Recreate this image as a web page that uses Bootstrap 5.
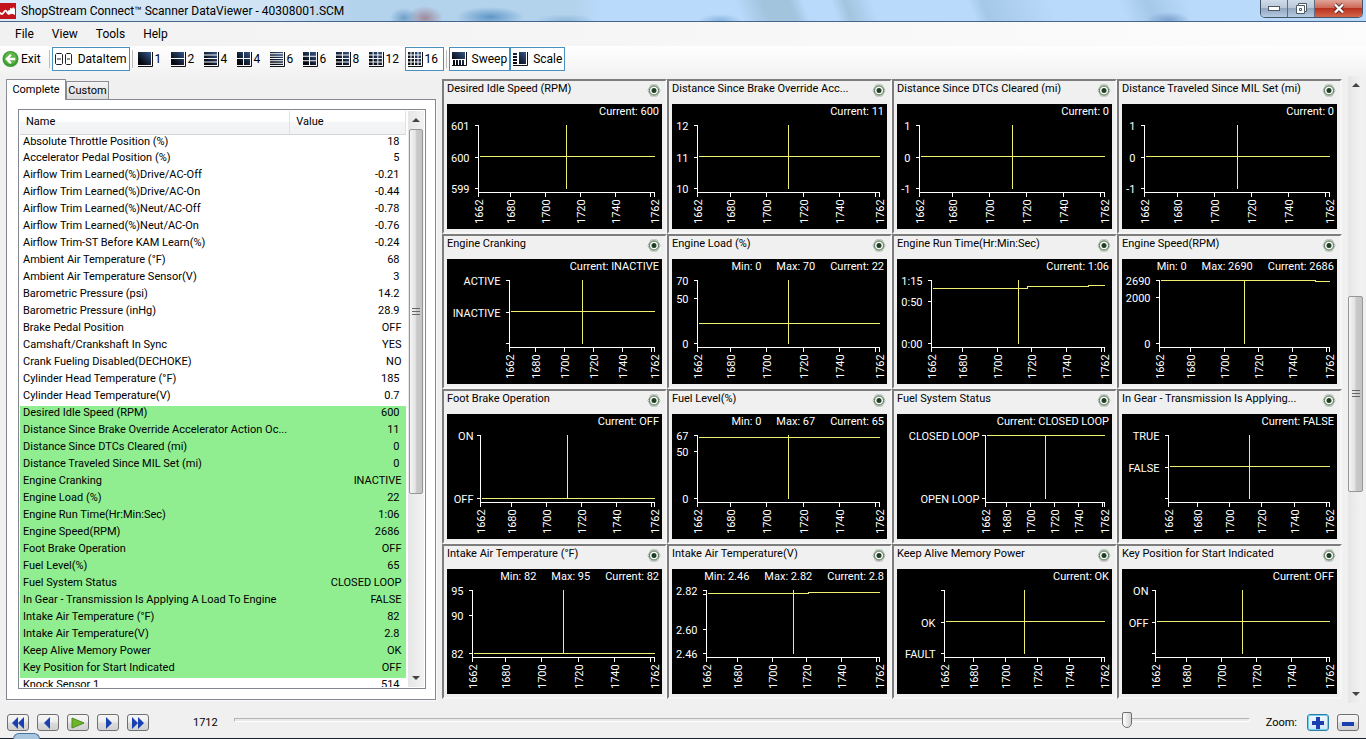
<!DOCTYPE html>
<html lang="en">
<head>
<meta charset="utf-8">
<meta name="viewport" content="width=device-width, initial-scale=1">
<title>ShopStream Connect™ Scanner DataViewer - 40308001.SCM</title>
<link rel="stylesheet" href="https://cdn.jsdelivr.net/npm/bootstrap@5.3.0/dist/css/bootstrap.min.css">
<style>
  :root { --data: Roboto, "Liberation Sans", sans-serif; }
  body { background: #f0f0f0; color: #000; font: 12px/16px var(--data); overflow: hidden; }
  button { font: inherit; color: inherit; }
  svg { display: block; flex: none; }

  .titlebar { height: 22px; border-bottom: 1px solid #46648c;
    background:
      radial-gradient(ellipse 14px 10px at 404px 18px, #6fa0c8, transparent),
      radial-gradient(ellipse 18px 12px at 425px 18px, #a08a9c, transparent),
      radial-gradient(ellipse 34px 10px at 490px 17px, #5f97c8, transparent),
      radial-gradient(ellipse 30px 7px at 565px 21px, #8fb9dd, transparent),
      radial-gradient(ellipse 22px 7px at 720px 21px, #86b4dc, transparent),
      radial-gradient(ellipse 22px 8px at 1168px 20px, #7ba4cf, transparent),
      linear-gradient(70deg, transparent 54%, #a3c4dd 56%, #a3c4dd 58%, transparent 59%, transparent 61%, #a3c4dd 62%, transparent 64%, transparent 71%, #a6c8e8 72%, transparent 77%, transparent 82%, #a6c8e8 84%, transparent 87%),
      linear-gradient(90deg, #dcebf7, #cfe3f5 20%, #b3d2ec 26%, #b3d2ec 42%, #b9dafb 44%, #b9dafb); }
  .apptitle { padding: 3px 0 0 1px; }
  .winbtns { height: 18px; border: 1px solid #44546a; border-top: 0; border-radius: 0 0 5px 5px; overflow: hidden; margin-right: 3px; }
  .winbtns button { border: 0; border-right: 1px solid #5c6d82; padding: 0; width: 27px;
    background: linear-gradient(#cfdbe8, #b9c8d8 45%, #93a7bd 50%, #b4cbe2); display: flex; align-items: center; justify-content: center; }
  .winbtns .closer { width: 47px; border-right: 0; background: linear-gradient(#e0a498, #cf6a58 45%, #b93220 50%, #d4664a); }

  .menubar { height: 24px; background: linear-gradient(90deg, #f1f1f1, #fcfcfc); padding-left: 15px; gap: 18px; }
  .menubar a { color: #000; text-decoration: none; }
  .toolstrip { height: 33px; padding-top: 1px; background: linear-gradient(#fff, #f0f0f0); }
  .tool { height: 24px; border: 1px solid transparent; background: none; padding: 0 2px; display: flex; align-items: center; gap: 1px; white-space: nowrap; }
  .tool.checked { border-color: #4a90bf; background: #fff; }
  .tool.one { width: 33px; }
  .tool.two { width: 39px; }
  .exit { padding: 0 5px 0 1px; gap: 2px; }
  .divider { width: 1px; height: 18px; background: #bdbdbd; margin: 3px 2px 0; }

  main { min-height: 0; padding: 0 3px 0 6px; }
  .side { flex: 0 0 430px; }
  .tabs { height: 20px; }
  .tabs button { font: 11px/14px var(--data); border: 1px solid #898c95; border-bottom: 0; padding: 0; }
  .tabs .front { height: 21px; width: 60px; background: #fff; position: relative; z-index: 1; margin-bottom: -1px; }
  .tabs .back { height: 18px; width: 43px; background: linear-gradient(#f3f3f3, #dcdcdc); }
  .tabpage { border: 1px solid #828790; background: #fff; padding: 9px 9px 10px 11px; min-height: 0; box-shadow: 1px 1px #fafafa; }
  .listbox { border: 1px solid #828790; padding: 1px; overflow: hidden; }
  .datalist { font: 11px/14px var(--data); width: 100%; table-layout: fixed; border-collapse: collapse; }
  .datalist col:first-child { width: 70%; }
  .datalist th { font-weight: 400; height: 23px; padding: 0 6px; background: linear-gradient(#fff 45%, #f4f5f6 50%, #f1f2f4); border-bottom: 1px solid #d5d5d5; border-right: 1px solid #dfe1e3; }
  .datalist td { height: 17px; padding: 0 3px; white-space: nowrap; vertical-align: top; }
  .datalist td + td { text-align: right; padding-right: 4px; }
  .datalist td.numeric { padding-right: 6px; }
  .datalist .picked { background: #90ee90; }

  .vscroll { background: linear-gradient(90deg, #e6e6e6, #f3f3f3); display: flex; flex-direction: column; align-items: center; }
  .vscroll .bar { width: 100%; border: 1px solid #979797; border-radius: 2px; background: linear-gradient(90deg, #f5f5f5, #e2e2e2 45%, #cacaca 55%, #c4c4c8); display: flex; align-items: center; justify-content: center; }
  .uparrow, .downarrow { border: 4px solid transparent; width: 0; height: 0; padding: 0; background: none; }
  .uparrow { border-width: 0 4px 4px; border-bottom-color: #444; }
  .downarrow { border-width: 4px 4px 0; border-top-color: #444; margin-top: auto; }
  .innerscroll { flex: 0 0 16px; padding: 7px 1px; margin-left: 2px; }
  .innerscroll .bar { flex: 0 0 65%; margin-top: 7px; }
  .outerscroll { flex: 0 0 15px; margin: -3px 0 -3px 6px; padding: 7px 0; }
  .outerscroll .bar { flex: 0 0 32%; margin-top: 209px; }

  .graphs { flex: 1 1 0; display: grid; grid-template-columns: repeat(4, minmax(0, 1fr)); align-content: start; margin-left: 6px; min-width: 0; }
  .graph { border: 2px solid; border-color: #7d7d7d #f6f6f6 #f6f6f6 #7d7d7d; padding: 0 3px 3px; font: 11px/14px var(--data); }
  .graph header { height: 23px; line-height: 16px; }
  .graph header svg { margin-top: 3px; }
  .screen { background: #000; color: #fff; }
  .stats { height: 17px; gap: 15px; padding: 1px 3px 0 0; }
  .plot { width: 100%; height: auto; }
  .plot text { fill: #fff; font: 11px var(--data); }
  .axis { fill: none; stroke: #fff; shape-rendering: crispEdges; }
  .trace { fill: none; stroke: #f0f070; shape-rendering: crispEdges; }

  .player { height: 38px; padding: 7px 7px 0; font: 11px/14px var(--data); }
  .keys { gap: 8px; }
  .framelabel { margin-left: 44px; }
  .key { width: 22px; height: 17px; border: 1px solid #707070; border-radius: 3px; padding: 0; background: linear-gradient(#f6f6f6, #ececec 48%, #dcdcdc 52%, #d0d0d0); display: flex; align-items: center; justify-content: center; }
  .key.hot { border-color: #2f7fa8; box-shadow: inset 0 0 0 1px #6fd0f2; background: linear-gradient(#f0f8fc, #cfe6f2); }
  .zoomkey { margin-left: 8px; }
  .zoomlabel { margin-right: 2px; }
  .timeline { appearance: none; -webkit-appearance: none; background: none; height: 18px; margin: 0 16px 5px 16px; flex: 1 1 0; min-width: 0; }
  .timeline::-webkit-slider-runnable-track { height: 4px; border: 1px solid #b4b4b4; border-bottom-color: #fff; border-right-color: #fff; background: #e9e9e9; }
  .timeline::-webkit-slider-thumb { appearance: none; -webkit-appearance: none; width: 10px; height: 16px; margin-top: -7px; background: linear-gradient(90deg, #fff, #d2d2d2); border: 1px solid #707070; border-radius: 2px 2px 5px 5px; }
  .taskbar { height: 1px; background: #16202e; position: relative; }
  .orb { position: absolute; left: 13px; bottom: 0; width: 27px; height: 6px; border-radius: 14px 14px 0 0; border: 1px solid #46749c; border-bottom: 0; background: #a9c6de; }
</style>
</head>
<body class="vh-100 d-flex flex-column">
<svg width="0" height="0" class="position-absolute" aria-hidden="true"><defs><linearGradient id="navy" gradientUnits="userSpaceOnUse" x1="0" y1="14" x2="14" y2="0"><stop offset=".2" stop-color="#05080f"/><stop offset="1" stop-color="#3b5f98"/></linearGradient></defs></svg>

<div class="titlebar d-flex align-items-start flex-shrink-0">
  <svg class="me-1" width="16" height="19" viewBox="0 -3 16 19" aria-hidden="true">
    <rect width="16" height="16" fill="#c4141c"/>
    <path d="M0 9.500c2 3 3 1 4-.5s2-2 3 0 2 2.500 3.500 1" fill="none" stroke="#fff" stroke-width="1.800"/>
    <path d="M8 7.500l2-.5V5l2.500.500L13 4l2 2v6l-2-1h-3l-2-1z" fill="#fff"/>
  </svg>
  <span class="apptitle flex-grow-1">ShopStream Connect™ Scanner DataViewer - 40308001.SCM</span>
  <div class="winbtns d-flex">
    <button aria-label="Minimize"><svg width="12" height="6"><rect x=".5" y=".5" width="11" height="4" fill="#fff" stroke="#4d5a68"/></svg></button>
    <button aria-label="Restore"><svg width="13" height="12"><path d="M3.500.500h8v8h-2v2h-8v-8h2z" fill="#fff" stroke="#4d5a68"/><path d="M3.500 2.500h6v6M4.500 5.500h2v2h-2z" fill="none" stroke="#4d5a68"/></svg></button>
    <button class="closer" aria-label="Close"><svg width="12" height="11"><path d="M2 1.500l8 8M10 1.500l-8 8" stroke="#5c2a2a" stroke-width="4"/><path d="M2 1.500l8 8M10 1.500l-8 8" stroke="#fff" stroke-width="2.400"/></svg></button>
  </div>
</div>

<nav class="menubar d-flex align-items-center flex-shrink-0">
  <a href="#">File</a><a href="#">View</a><a href="#">Tools</a><a href="#">Help</a>
</nav>

<div class="toolstrip d-flex align-items-start flex-shrink-0" role="toolbar">
  <button class="tool exit">
    <svg width="17" height="18" viewBox="0 0 18 18"><circle cx="9" cy="9" r="8.500" fill="#3d9b35"/><circle cx="9" cy="8" r="6.500" fill="#6cc04a" opacity=".7"/><path d="M9.500 4.500L5 9l4.500 4.500M5.500 9H14" fill="none" stroke="#fff" stroke-width="2.400"/></svg>Exit</button>
  <span class="divider"></span>
  <button class="tool checked">
    <svg class="me-1" width="18" height="12" viewBox="0 0 18 12"><path d="M1.500.500h5l1 1v9l-1 1h-5l-1-1v-9zM11.500.500h4l1 1v9l-1 1h-4l-1-1v-9zM2 6h4M12 6h3" fill="none" stroke="#222"/></svg>DataItem</button>
  <span class="divider"></span>
  <div class="d-flex" id="layouts"></div>
  <span class="divider"></span>
  <button class="tool checked"><svg class="me-1" width="15" height="16"><path d="M0 1h13v7H0zM1 9h2v5H1zM4 9h2v5H4zM7 9h2v5H7zM10 9h2v5h-2z" fill="url(#navy)"/><path d="M0 14.500h14.500V1" fill="none" stroke="#111"/></svg>Sweep</button>
  <button class="tool checked"><svg class="me-1" width="15" height="16"><path d="M0 2h4v2H0zM0 5h4v2H0zM0 8h4v2H0zM0 11h4v2H0zM6 1h7v12H6z" fill="url(#navy)"/><path d="M0 14.500h14.500V1" fill="none" stroke="#111"/></svg>Scale</button>
</div>

<main class="d-flex flex-grow-1">
  <section class="side d-flex flex-column">
    <div class="tabs d-flex align-items-end" role="tablist">
      <button class="front" role="tab" aria-selected="true">Complete</button><button class="back" role="tab">Custom</button>
    </div>
    <div class="tabpage flex-grow-1 d-flex">
      <div class="listbox d-flex flex-grow-1">
        <div class="flex-grow-1 overflow-hidden">
          <table class="datalist">
            <colgroup><col><col></colgroup>
            <thead><tr><th>Name</th><th>Value</th></tr></thead>
            <tbody id="rows"></tbody>
          </table>
        </div>
        <div class="vscroll innerscroll"><button class="uparrow" aria-label="Scroll up"></button><div class="bar"><svg width="8" height="8"><path d="M0 .5h8M0 3.500h8M0 6.500h8" stroke="#666"/></svg></div><button class="downarrow" aria-label="Scroll down"></button></div>
      </div>
    </div>
  </section>
  <section class="graphs" id="graphs"></section>
  <div class="vscroll outerscroll"><button class="uparrow" aria-label="Scroll up"></button><div class="bar"><svg width="8" height="8"><path d="M0 .5h8M0 3.500h8M0 6.500h8" stroke="#666"/></svg></div><button class="downarrow" aria-label="Scroll down"></button></div>
</main>

<footer class="player d-flex align-items-center flex-shrink-0">
  <div class="d-flex keys">
    <button class="key" aria-label="First"><svg width="14" height="12"><path d="M7 0v12L1 6zM13 0v12L7 6z" fill="#1a3fae"/></svg></button>
    <button class="key" aria-label="Back"><svg width="14" height="12"><path d="M9 0v12L3 6z" fill="#1a3fae"/></svg></button>
    <button class="key" aria-label="Play"><svg width="16" height="12"><path d="M2 1l12 5-12 5z" fill="#6fb52a" stroke="#4a8a1c"/></svg></button>
    <button class="key" aria-label="Forward"><svg width="14" height="12"><path d="M5 0v12l6-6z" fill="#1a3fae"/></svg></button>
    <button class="key" aria-label="Last"><svg width="14" height="12"><path d="M1 0v12l6-6zM7 0v12l6-6z" fill="#1a3fae"/></svg></button>
  </div>
  <label class="framelabel" for="pos">1712</label>
  <input class="timeline" id="pos" type="range" min="0" max="1000" value="884">
  <span class="zoomlabel">Zoom:</span>
  <button class="key hot zoomkey" aria-label="Zoom in"><svg width="14" height="12"><path d="M5 0h4v4h4v4H9v4H5V8H1V4h4z" fill="#1a3fae"/></svg></button>
  <button class="key zoomkey" aria-label="Zoom out"><svg width="14" height="12"><path d="M1 5h12v4H1z" fill="#1a3fae"/></svg></button>
</footer>
<div class="taskbar flex-shrink-0"><span class="orb"></span></div>

<script>
  // Toolbar layout buttons: [label, columns, rows]
  const layouts = [[1,1,1],[2,1,2],[4,1,4],[4,2,2],[6,1,6],[6,2,3],[8,2,4],[12,3,4],[16,4,4]];
  document.getElementById('layouts').innerHTML = layouts.map(([n, c, r]) => {
    let d = '';
    const gap = 1, w = (13 - gap * (c - 1)) / c, h = (13 - gap * (r - 1)) / r;
    for (let i = 0; i < c; i++) for (let j = 0; j < r; j++) d += `M${i * (w + gap)} ${1 + j * (h + gap)}h${w}v${h}h${-w}z`;
    return `<button class="tool ${n > 9 ? 'two' : 'one'} ${n === 16 ? 'checked' : ''}"><svg width="16" height="16"><path d="${d}" fill="url(#navy)"/><path d="M0 15.500h14.500V1" fill="none" stroke="#111"/></svg>${n}</button>`;
  }).join('');

  const readings = [
    ['Absolute Throttle Position (%)','18'],['Accelerator Pedal Position (%)','5'],['Airflow Trim Learned(%)Drive/AC-Off','-0.21'],
    ['Airflow Trim Learned(%)Drive/AC-On','-0.44'],['Airflow Trim Learned(%)Neut/AC-Off','-0.78'],['Airflow Trim Learned(%)Neut/AC-On','-0.76'],
    ['Airflow Trim-ST Before KAM Learn(%)','-0.24'],['Ambient Air Temperature (°F)','68'],['Ambient Air Temperature Sensor(V)','3'],
    ['Barometric Pressure (psi)','14.2'],['Barometric Pressure (inHg)','28.9'],['Brake Pedal Position','OFF'],['Camshaft/Crankshaft In Sync','YES'],
    ['Crank Fueling Disabled(DECHOKE)','NO'],['Cylinder Head Temperature (°F)','185'],['Cylinder Head Temperature(V)','0.7'],
    ['Desired Idle Speed (RPM)','600'],['Distance Since Brake Override Accelerator Action Oc...','11'],['Distance Since DTCs Cleared (mi)','0'],
    ['Distance Traveled Since MIL Set (mi)','0'],['Engine Cranking','INACTIVE'],['Engine Load (%)','22'],['Engine Run Time(Hr:Min:Sec)','1:06'],
    ['Engine Speed(RPM)','2686'],['Foot Brake Operation','OFF'],['Fuel Level(%)','65'],['Fuel System Status','CLOSED LOOP'],
    ['In Gear - Transmission Is Applying A Load To Engine','FALSE'],['Intake Air Temperature (°F)','82'],['Intake Air Temperature(V)','2.8'],
    ['Keep Alive Memory Power','OK'],['Key Position for Start Indicated','OFF'],['Knock Sensor 1','514']];
  document.getElementById('rows').innerHTML = readings.map(([name, v], i) =>
    `<tr class="${i > 15 && i < 32 ? 'picked' : ''}"><td>${name}</td><td class="${/\d/.test(v) ? 'numeric' : ''}">${v}</td></tr>`).join('');

  // Graphs: title, header values, left edge of the plot, y ticks [position, label], trace steps [from x, y], label gap
  const T = 21.5, M = 53.5, B = 84.5, R = 207.5;
  const graphs = [
    ['Desired Idle Speed (RPM)',['Current: 600'],31.5,[[T,'601'],[M,'600'],[B,'599']],[[0,52.5]]],
    ['Distance Since Brake Override Acc...',['Current: 11'],25.5,[[T,'12'],[M,'11'],[B,'10']],[[0,52.5]]],
    ['Distance Since DTCs Cleared (mi)',['Current: 0'],22.5,[[T,'1'],[M,'0'],[B,'-1']],[[0,52.5]]],
    ['Distance Traveled Since MIL Set (mi)',['Current: 0'],22.5,[[T,'1'],[M,'0'],[B,'-1']],[[0,52.5]]],
    ['Engine Cranking',['Current: INACTIVE'],62.5,[[T,'ACTIVE'],[M,'INACTIVE'],[B,'']],[[0,52.5]]],
    ['Engine Load (%)',['Min: 0','Max: 70','Current: 22'],25.5,[[T,'70'],[39.5,'50'],[B,'0']],[[0,64.5]]],
    ['Engine Run Time(Hr:Min:Sec)',['Current: 1:06'],34.5,[[T,'1:15'],[42.5,'0:50'],[B,'0:00']],[[0,29.5],[130,27.5],[191,26.5]]],
    ['Engine Speed(RPM)',['Min: 0','Max: 2690','Current: 2686'],37.5,[[T,'2690'],[38.5,'2000'],[B,'0']],[[0,21.5],[193,22.5]]],
    ['Foot Brake Operation',['Current: OFF'],33.5,[[T,'ON'],[B,'OFF']],[[0,B]],7],
    ['Fuel Level(%)',['Min: 0','Max: 67','Current: 65'],25.5,[[T,'67'],[37.5,'50'],[B,'0']],[[0,23.5]]],
    ['Fuel System Status',['Current: CLOSED LOOP'],88.5,[[T,'CLOSED LOOP'],[B,'OPEN LOOP']],[[0,T]],6],
    ['In Gear - Transmission Is Applying...',['Current: FALSE'],46.5,[[T,'TRUE'],[M,'FALSE'],[B,'']],[[0,52.5]]],
    ['Intake Air Temperature (°F)',['Min: 82','Max: 95','Current: 82'],25.5,[[T,'95'],[46.5,'90'],[B,'82']],[[0,B]]],
    ['Intake Air Temperature(V)',['Min: 2.46','Max: 2.82','Current: 2.8'],34.5,[[T,'2.82'],[25.5,''],[60.5,'2.60'],[B,'2.46']],[[0,24.5],[136,23.5]]],
    ['Keep Alive Memory Power',['Current: OK'],47.5,[[T,''],[M,'OK'],[B,'FAULT']],[[0,52.5]]],
    ['Key Position for Start Indicated',['Current: OFF'],33.5,[[T,'ON'],[M,'OFF'],[B,'']],[[0,52.5]],7]];
  document.getElementById('graphs').innerHTML = graphs.map(([title, stats, L, ticks, steps, gap = 9]) => {
    const x = v => Math.floor(L + (v - 1662) / 100 * (R - L)) + .5;
    let axis = `M${L} ${T}V88.500H${R}`, labels = '';
    for (const [y, s] of ticks) {
      axis += `M${L - 4} ${y}H${L}`;
      if (s) labels += `<text x="${L - gap}" y="${y + 4.5}" text-anchor="end">${s}</text>`;
    }
    for (const v of [1662, 1680, 1700, 1720, 1740, 1760, 1762]) {
      axis += `M${x(v)} 88V93`;
      if (v !== 1760) labels += `<text transform="translate(${x(v) + 4.5} 120) rotate(-90)">${v}</text>`;
    }
    const trace = steps.map(([fx, y], i) => i ? `H${fx}L${fx + 1} ${y}` : `M${L + 1} ${y}`).join('') + `H${R}M${x(1712)} 21V85`;
    return `<article class="graph"><header class="d-flex justify-content-between"><span class="text-nowrap">${title}</span>
      <svg width="16" height="13" viewBox="0 0 16 12"><path d="M5 .5h6L14 6l-3 5.500H5L2 6z" fill="#fff" stroke="#9fb09f"/><circle cx="8" cy="6" r="4.500" fill="none" stroke="#456845"/><circle cx="8" cy="6" r="2.500" fill="#1f3f24"/></svg></header>
      <div class="screen"><div class="stats d-flex justify-content-end">${stats.map(s => `<span>${s}</span>`).join('')}</div>
      <svg class="plot" viewBox="0 17 215 108" role="img" aria-label="${title}"><path class="axis" d="${axis}"/><path class="trace" d="${trace}"/>${labels}</svg></div></article>`;
  }).join('');
</script>
<script src="https://cdn.jsdelivr.net/npm/bootstrap@5.3.0/dist/js/bootstrap.bundle.min.js"></script>
</body>
</html>
